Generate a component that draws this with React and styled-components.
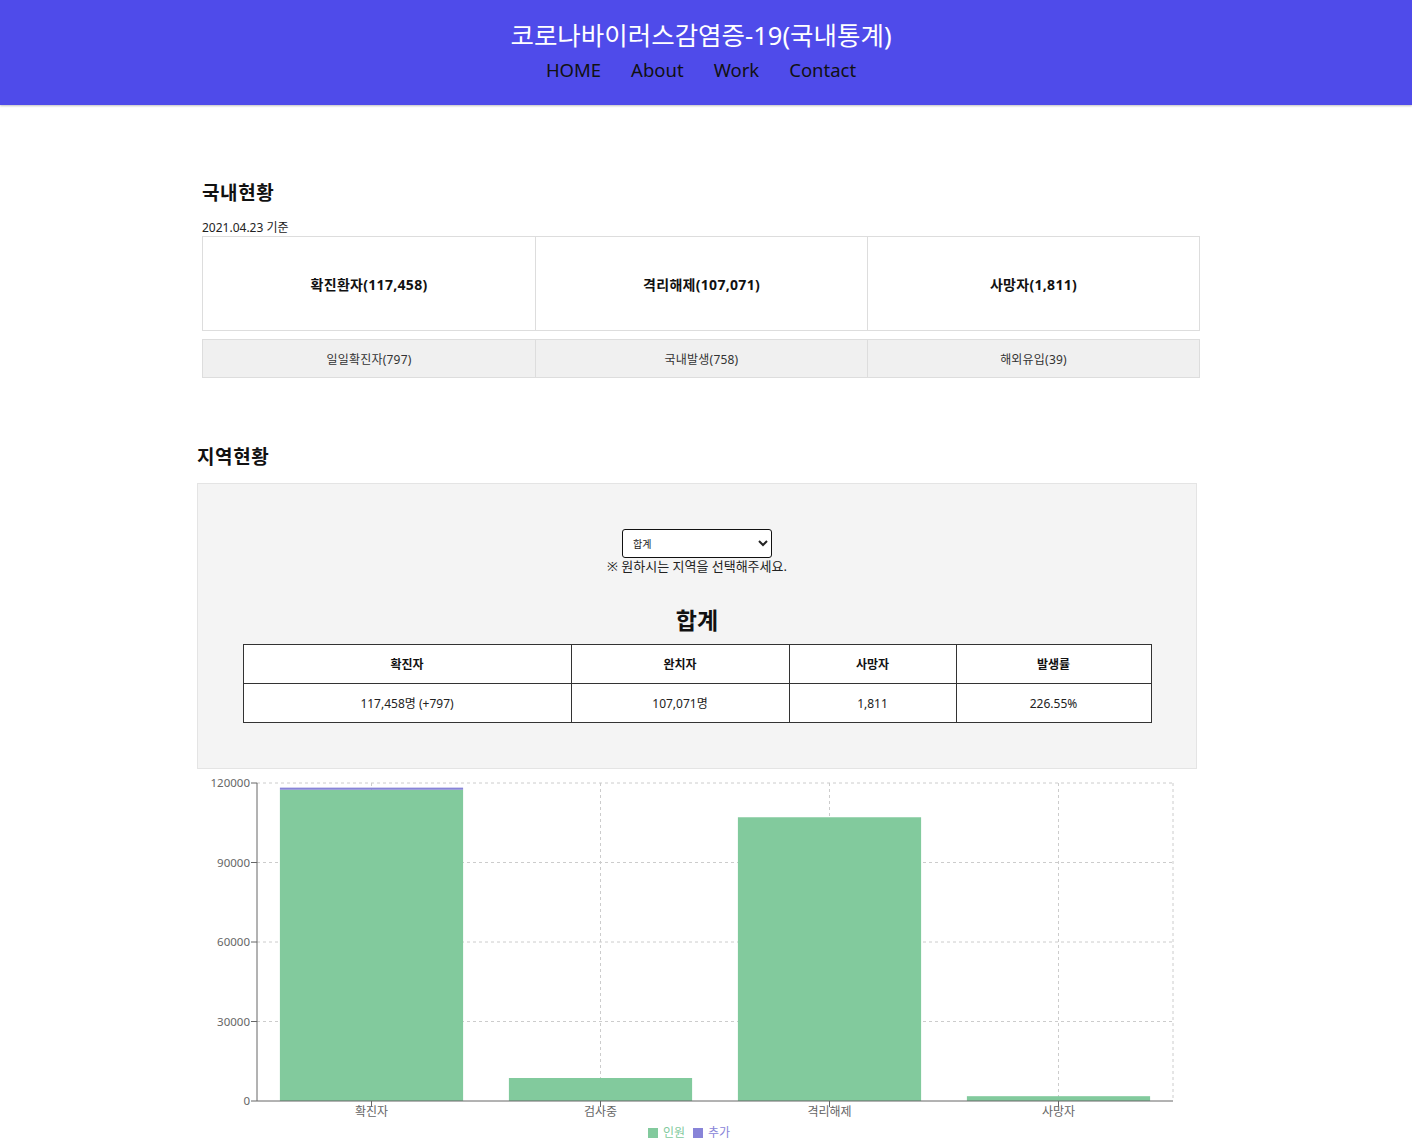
import React from "react";
import styled, { createGlobalStyle } from "styled-components";

const GlobalStyle = createGlobalStyle`
  body {
    margin: 0;
    background: #fff;
    font-family: "Noto Sans", "Noto Sans CJK KR", sans-serif;
    color: #111;
  }
`;

const Header = styled.header`
  background: #4f4bea;
  height: 105px;
  box-sizing: border-box;
  padding: 18px 10px 0 0;
  display: flex;
  flex-direction: column;
  align-items: center;
  box-shadow: 0 1px 2px rgba(0, 0, 0, 0.25);
`;

const Title = styled.h1`
  margin: 0;
  color: #fff;
  font-size: 25.5px;
  font-weight: 400;
  line-height: 35px;
`;

const Nav = styled.nav`
  display: flex;
  gap: 30px;
  margin-top: 3px;
`;

const NavLink = styled.a`
  color: #111;
  font-size: 18.5px;
  line-height: 27px;
  text-decoration: none;
`;

const Main = styled.main`
  width: 1004px;
  margin-left: 197px;
`;

const Section = styled.section`
  padding: ${(p) => p.$pad};
`;

const Heading = styled.h2`
  margin: 0;
  font-size: 19px;
  font-weight: 700;
  letter-spacing: 0.6px;
  line-height: 26px;
`;

const DateText = styled.div`
  font-size: 12px;
  line-height: 17px;
  margin-top: 13px;
  color: #222;
`;

const CardRow = styled.div`
  display: grid;
  grid-template-columns: repeat(3, 1fr);
  border: 1px solid #ddd;
  background: ${(p) => (p.$sub ? "#f0f0f0" : "#fff")};
  margin-top: ${(p) => (p.$sub ? "8px" : "0")};
`;

const Card = styled.div`
  height: ${(p) => (p.$sub ? "37px" : "93px")};
  display: flex;
  align-items: center;
  justify-content: center;
  font-size: ${(p) => (p.$sub ? "12px" : "14px")};
  font-weight: ${(p) => (p.$sub ? 400 : 700)};
  letter-spacing: ${(p) => (p.$sub ? "0.2px" : "0.3px")};
  color: ${(p) => (p.$sub ? "#333" : "#111")};
  & + & {
    border-left: 1px solid #ddd;
  }
`;

const RegionBox = styled.div`
  margin-top: 13px;
  width: 1000px;
  box-sizing: border-box;
  background: #f4f4f4;
  border: 1px solid #e4e4e4;
  padding: 45px 45px 45px 45px;
  display: flex;
  flex-direction: column;
  align-items: center;
`;

const Select = styled.select`
  width: 150px;
  height: 29px;
  box-sizing: border-box;
  font-size: 10px;
  font-family: "Noto Sans", "Noto Sans CJK KR", sans-serif;
  border: 1.5px solid #111;
  border-radius: 3px;
  background: #fff;
  padding: 0 6px;
  color: #222;
`;

const Note = styled.div`
  font-size: 13px;
  line-height: 17px;
  margin-top: 0;
  color: #222;
`;

const RegionTitle = styled.h3`
  margin: 29px 0 7px;
  font-size: 23px;
  font-weight: 700;
  line-height: 33px;
`;

const Table = styled.table`
  width: 908px;
  border-collapse: collapse;
  background: #fff;
  table-layout: fixed;
`;

const Th = styled.th`
  width: ${(p) => p.$w}px;
  height: 38px;
  border: 1px solid #333;
  font-size: 12px;
  font-weight: 700;
  padding: 0;
`;

const Td = styled.td`
  height: 38px;
  border: 1px solid #333;
  font-size: 12px;
  text-align: center;
  padding: 0;
  color: #222;
`;

const ChartWrap = styled.div`
  width: 1000px;
  margin-top: 1px;

  svg {
    display: block;
  }
`;

const Legend = styled.div`
  display: flex;
  justify-content: center;
  gap: 8px;
  padding-right: 16px;
  font-size: 12px;
  line-height: 16px;
`;

const LegendItem = styled.span`
  display: flex;
  align-items: center;
  gap: 5px;
  color: ${(p) => p.$color};
`;

const Swatch = styled.i`
  width: 10px;
  height: 10px;
  background: ${(p) => p.$color};
`;

const summary = [
  { label: "확진환자", value: "117,458" },
  { label: "격리해제", value: "107,071" },
  { label: "사망자", value: "1,811" },
];

const sub = [
  { label: "일일확진자", value: "797" },
  { label: "국내발생", value: "758" },
  { label: "해외유입", value: "39" },
];

const regions = [
  "합계", "서울", "부산", "대구", "인천", "광주", "대전", "울산", "세종", "경기",
  "강원", "충북", "충남", "전북", "전남", "경북", "경남", "제주", "검역",
];

const chartData = [
  { name: "확진자", count: 117458, add: 797 },
  { name: "검사중", count: 8679, add: 0 },
  { name: "격리해제", count: 107071, add: 0 },
  { name: "사망자", count: 1811, add: 0 },
];

const GREEN = "#82ca9d";
const PURPLE = "#8884d8";

const BarChart = () => {
  const left = 60;
  const right = 976;
  const top = 13;
  const bottom = 331;
  const max = 120000;
  const band = (right - left) / chartData.length;
  const y = (v) => bottom - (v / max) * (bottom - top);
  const ticks = [0, 30000, 60000, 90000, 120000];

  return (
    <svg width="1000" height="355" fontFamily='"Noto Sans", "Noto Sans CJK KR", sans-serif'>
      {ticks.slice(1).map((t) => (
        <line key={t} x1={left} x2={right} y1={y(t)} y2={y(t)} stroke="#ccc" strokeDasharray="3 3" />
      ))}
      {chartData.map((d, i) => (
        <line
          key={d.name}
          x1={left + band * (i + 0.5)}
          x2={left + band * (i + 0.5)}
          y1={top}
          y2={bottom}
          stroke="#ccc"
          strokeDasharray="3 3"
        />
      ))}
      <line x1={right} x2={right} y1={top} y2={bottom} stroke="#ccc" strokeDasharray="3 3" />

      {chartData.map((d, i) => {
        const x = left + band * i + band * 0.1;
        const w = band * 0.8;
        return (
          <g key={d.name}>
            <rect x={x} y={y(d.count)} width={w} height={bottom - y(d.count)} fill={GREEN} />
            {d.add > 0 && (
              <rect x={x} y={y(d.count + d.add)} width={w} height={y(d.count) - y(d.count + d.add)} fill={PURPLE} />
            )}
          </g>
        );
      })}

      <line x1={left} x2={left} y1={top} y2={bottom} stroke="#666" />
      <line x1={left} x2={right} y1={bottom} y2={bottom} stroke="#666" />
      {ticks.map((t) => (
        <g key={t}>
          <line x1={left - 6} x2={left} y1={y(t)} y2={y(t)} stroke="#666" />
          <text x={left - 7} y={y(t) + 4} textAnchor="end" fontSize="11.5" fill="#666">
            {t}
          </text>
        </g>
      ))}
      {chartData.map((d, i) => {
        const cx = left + band * (i + 0.5);
        return (
          <g key={d.name}>
            <line x1={cx} x2={cx} y1={bottom} y2={bottom + 6} stroke="#666" />
            <text x={cx} y={bottom + 15} textAnchor="middle" fontSize="12" fill="#666">
              {d.name}
            </text>
          </g>
        );
      })}
    </svg>
  );
};

const App = () => {
  return (
    <>
      <GlobalStyle />
      <Header>
        <Title>코로나바이러스감염증-19(국내통계)</Title>
        <Nav>
          <NavLink href="#">HOME</NavLink>
          <NavLink href="#">About</NavLink>
          <NavLink href="#">Work</NavLink>
          <NavLink href="#">Contact</NavLink>
        </Nav>
      </Header>
      <Main>
        <Section $pad="75px 1px 0 5px">
          <Heading>국내현황</Heading>
          <DateText>2021.04.23 기준</DateText>
          <CardRow>
            {summary.map((s) => (
              <Card key={s.label}>
                {s.label}({s.value})
              </Card>
            ))}
          </CardRow>
          <CardRow $sub>
            {sub.map((s) => (
              <Card $sub key={s.label}>
                {s.label}({s.value})
              </Card>
            ))}
          </CardRow>
        </Section>

        <Section $pad="66px 0 0 0">
          <Heading>지역현황</Heading>
          <RegionBox>
            <Select defaultValue="합계">
              {regions.map((r) => (
                <option key={r}>{r}</option>
              ))}
            </Select>
            <Note>※ 원하시는 지역을 선택해주세요.</Note>
            <RegionTitle>합계</RegionTitle>
            <Table>
              <thead>
                <tr>
                  <Th $w={327}>확진자</Th>
                  <Th $w={217}>완치자</Th>
                  <Th $w={166}>사망자</Th>
                  <Th $w={194}>발생률</Th>
                </tr>
              </thead>
              <tbody>
                <tr>
                  <Td>117,458명 (+797)</Td>
                  <Td>107,071명</Td>
                  <Td>1,811</Td>
                  <Td>226.55%</Td>
                </tr>
              </tbody>
            </Table>
          </RegionBox>
          <ChartWrap>
            <BarChart />
            <Legend>
              <LegendItem $color={GREEN}>
                <Swatch $color={GREEN} />
                인원
              </LegendItem>
              <LegendItem $color={PURPLE}>
                <Swatch $color={PURPLE} />
                추가
              </LegendItem>
            </Legend>
          </ChartWrap>
        </Section>
      </Main>
    </>
  );
};

export default App;
